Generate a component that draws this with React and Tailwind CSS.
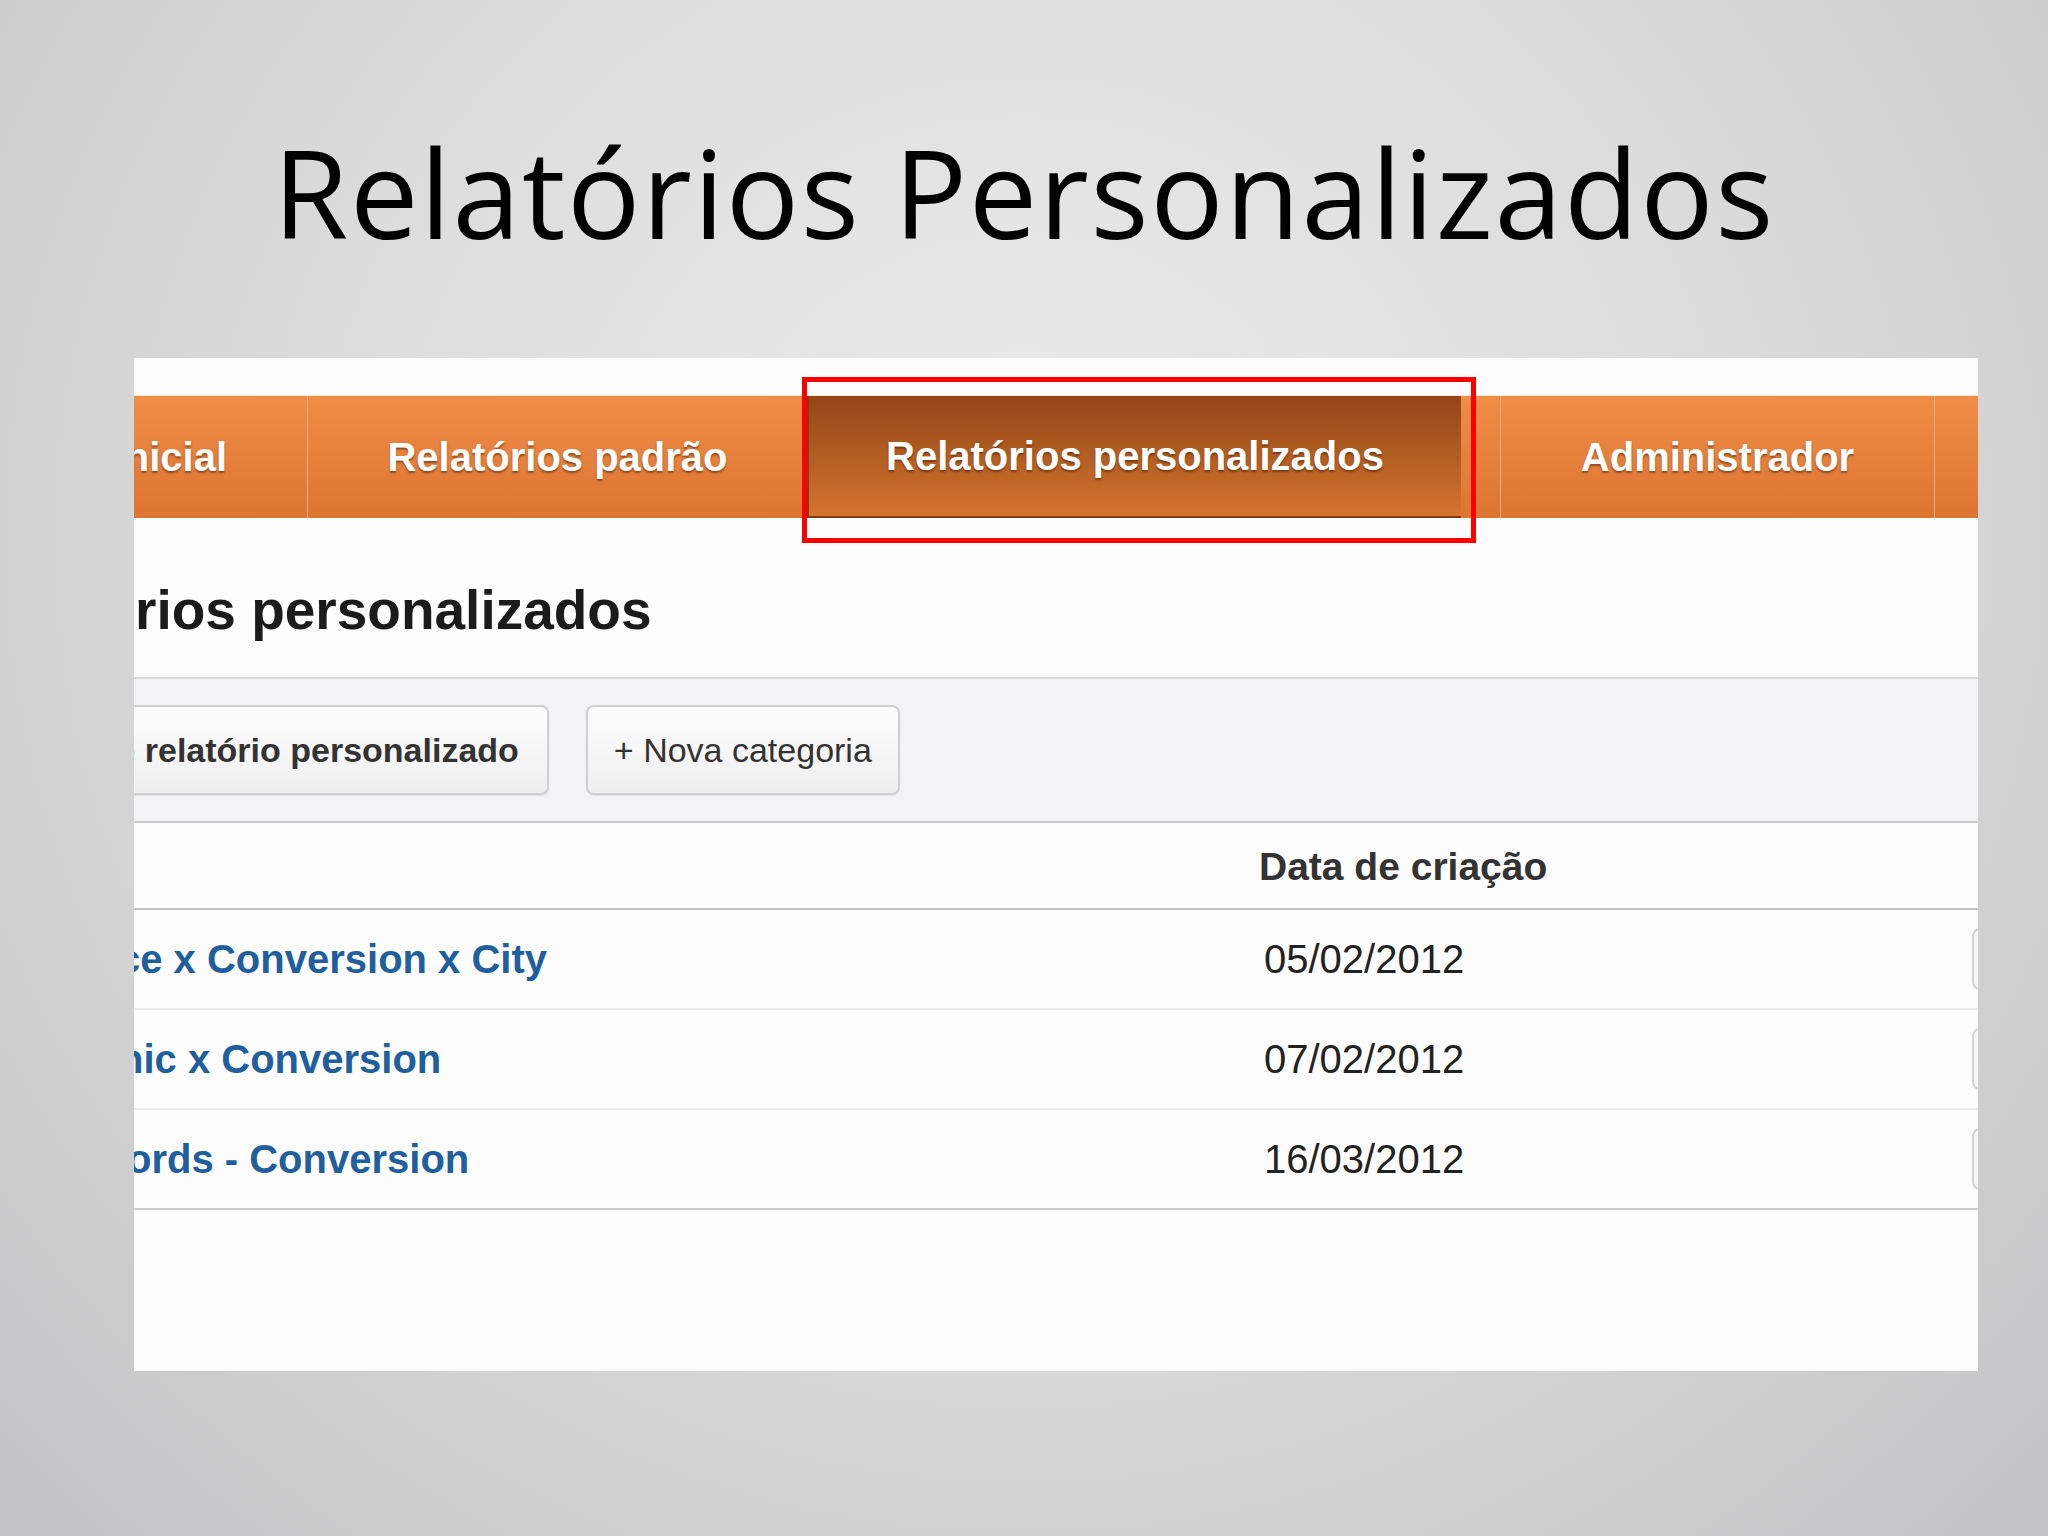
import React from 'react';

const rows = [
  { name: 'ce x Conversion x City', offset: 'ml-[-16px]', date: '05/02/2012' },
  { name: 'nic x Conversion', offset: 'ml-[-15px]', date: '07/02/2012' },
  { name: 'ords - Conversion', offset: 'ml-[-7px]', date: '16/03/2012' },
];

const tabText = "text-[40px] font-bold text-white whitespace-nowrap [text-shadow:0_2px_2px_rgba(80,30,0,0.55)]";

function NavBar() {
  return (
    <div className="mt-[37px] h-[123px] flex border-t border-[#fde6d2] bg-gradient-to-b from-[#f08d47] to-[#dc7532]">
      <div className="w-[173px] shrink-0 flex items-center justify-end pr-[80px]">
        <span className={tabText}>Inicial</span>
      </div>
      <div className="w-px shrink-0 bg-[#f6b07c]" />
      <div className="w-[499px] shrink-0 flex items-center justify-center">
        <span className={tabText}>Relatórios padrão</span>
      </div>
      <div className="w-[654px] shrink-0 flex items-center justify-center border-l-2 border-b-2 border-[#7e3d12] bg-gradient-to-b from-[#924616] to-[#d4752f]">
        <span className={tabText}>Relatórios personalizados</span>
      </div>
      <div className="w-[39px] shrink-0" />
      <div className="w-px shrink-0 bg-[#f6b07c]" />
      <div className="w-[433px] shrink-0 flex items-center justify-center">
        <span className={tabText}>Administrador</span>
      </div>
      <div className="w-px shrink-0 bg-[#f6b07c]" />
      <div className="flex-1" />
    </div>
  );
}

function Toolbar() {
  const btn = "h-[90px] shrink-0 flex items-center rounded-[8px] border-2 border-[#cfcfcf] bg-gradient-to-b from-[#fefefe] to-[#efefef] text-[34px] text-[#333] whitespace-nowrap shadow-[0_1px_1px_rgba(0,0,0,0.08)]";
  return (
    <div className="h-[146px] flex items-center gap-[37px] bg-[#f3f3f5] border-t-2 border-b-2 border-t-[#dadada] border-b-[#c9c9c9]">
      <button className={`${btn} ml-[-143px] px-[28px] font-bold`}>+ Novo relatório personalizado</button>
      <button className={`${btn} px-[26px]`}>+ Nova categoria</button>
    </div>
  );
}

function ReportTable() {
  return (
    <div>
      <div className="h-[87px] flex items-center pt-[4px] border-b-2 border-[#c4c4c4]">
        <div className="w-[1125px] shrink-0" />
        <span className="text-[39px] font-bold text-[#333]">Data de criação</span>
      </div>
      {rows.map((r, i) => (
        <div
          key={r.date}
          className={`h-[100px] flex items-center border-b-2 ${i === rows.length - 1 ? 'border-[#cdcdcd]' : 'border-[#ececec]'}`}
        >
          <div className="w-[1125px] shrink-0 whitespace-nowrap">
            <span className={`inline-block ${r.offset} text-[40px] font-bold text-[#1f5f9e]`}>{r.name}</span>
          </div>
          <div className="w-[713px] shrink-0 pl-[5px] text-[40px] text-[#222]">{r.date}</div>
          <div className="w-[80px] h-[62px] shrink-0 rounded-[8px] border-2 border-[#d4d4d4] bg-[#f7f7f7]" />
        </div>
      ))}
    </div>
  );
}

export default function App() {
  return (
    <div className="w-[2048px] h-[1536px] overflow-hidden bg-[radial-gradient(ellipse_at_50%_35%,#ececec_0%,#dcdcdc_50%,#c3c3c5_100%)] font-['Liberation_Sans',Arial,sans-serif]">
      <h1 className="pt-[131px] text-center text-[122px] leading-none font-medium tracking-[1.6px] text-black font-['Open_Sans',sans-serif]">
        Relatórios Personalizados
      </h1>
      <div className="relative mt-[105px] ml-[134px] w-[1844px] h-[1013px] overflow-hidden bg-[#fdfdfd]">
        <NavBar />
        <div className="h-[159px] pt-[65px] pl-[1px] text-[55px] leading-none font-bold text-[#1b1b1b]">
          rios personalizados
        </div>
        <Toolbar />
        <ReportTable />
        {/* highlight around the active tab */}
        <div className="absolute left-[668px] top-[19px] w-[674px] h-[166px] border-[5px] border-[#ff0000] pointer-events-none" />
      </div>
    </div>
  );
}
